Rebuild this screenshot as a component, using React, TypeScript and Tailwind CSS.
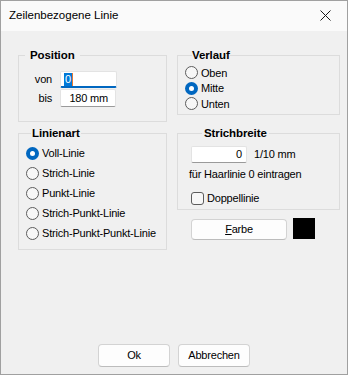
import React from 'react';

const font = "font-['Liberation_Sans',Arial,sans-serif]";

function Group({
  title,
  legendClass,
  className,
  children,
}: {
  title: string;
  legendClass: string;
  className: string;
  children: React.ReactNode;
}) {
  return (
    <fieldset className={`border border-[#dcdcdc] min-w-0 ${className}`}>
      <legend className={`text-[11.5px] font-bold leading-[14px] tracking-[-0.1px] ${legendClass}`}>{title}</legend>
      {children}
    </fieldset>
  );
}

function Radio({ checked, label, className = '' }: { checked?: boolean; label: string; className?: string }) {
  return (
    <div className={`flex items-center gap-[3px] ${className}`}>
      {checked ? (
        <span className="flex h-[13px] w-[13px] shrink-0 items-center justify-center rounded-full bg-[#0067c0]">
          <span className="h-[5px] w-[5px] rounded-full bg-white" />
        </span>
      ) : (
        <span className="h-[13px] w-[13px] shrink-0 rounded-full border border-[#5c5c5c] bg-[#f7f7f7]" />
      )}
      <span>{label}</span>
    </div>
  );
}

function Button({ children, className = '' }: { children: React.ReactNode; className?: string }) {
  return (
    <button className={`flex items-center justify-center rounded-[4px] border border-[#d3d3d3] border-b-[#bcbcbc] bg-[#fdfdfd] ${className}`}>
      {children}
    </button>
  );
}

export default function App() {
  return (
    <div className={`h-[376px] w-[349px] bg-white text-[11px] tracking-[-0.2px] text-black ${font}`}>
      <div className="flex h-[375px] w-[348px] flex-col border border-[#a0a0a0]">
        {/* Title bar */}
        <div className="flex h-[30px] shrink-0 items-start justify-between bg-[#fafafa] pl-[8px] pr-[16px] pt-[7px]">
          <span className="text-[11.5px] leading-[14px] tracking-normal">Zeilenbezogene Linie</span>
          <svg className="mt-[2px] h-[11px] w-[11px]" viewBox="0 0 11 11" fill="none" stroke="#1a1a1a" strokeWidth="1">
            <path d="M0.5 0.5L10.5 10.5M10.5 0.5L0.5 10.5" />
          </svg>
        </div>

        {/* Client area */}
        <div className="flex flex-1 flex-col bg-[#f0f0f0] pl-[17px] pr-[7px] pt-[17px]">
          <div className="grid grid-cols-[149px_163px] items-start gap-x-[10px] gap-y-[4px]">
            {/* Position */}
            <Group title="Position" legendClass="ml-[6px] px-[5px]" className="pb-[14px] pt-[9px]">
              <div className="flex flex-col gap-[1px] pl-[13px]">
                <div className="flex items-center gap-[8px]">
                  <span className="w-[20px] text-right">von</span>
                  <div className="flex h-[17px] w-[57px] items-center rounded-[2px] border border-[#e3e3e3] border-b-2 border-b-[#0067c0] bg-white pl-[3px]">
                    <span className="bg-[#0078d7] px-[1px] leading-[13px] text-white">0</span>
                    <span className="h-[13px] w-[1px] bg-[#e8772e]" />
                  </div>
                </div>
                <div className="flex items-center gap-[8px]">
                  <span className="w-[20px] text-right">bis</span>
                  <div className="flex h-[18px] w-[56px] items-center justify-end rounded-[2px] border border-[#e3e3e3] border-b-[#9a9a9a] bg-white pr-[7px]">
                    180 mm
                  </div>
                </div>
              </div>
            </Group>

            {/* Verlauf */}
            <Group title="Verlauf" legendClass="ml-[7px]" className="pb-[2px] pl-[7px] pt-[3px]">
              <Radio label="Oben" className="h-[15.5px]" />
              <Radio label="Mitte" checked className="h-[15.5px]" />
              <Radio label="Unten" className="h-[15.5px]" />
            </Group>

            {/* Linienart */}
            <Group title="Linienart" legendClass="ml-[5px] px-[1px]" className="pb-[6px] pl-[7px] pt-[3px]">
              <Radio label="Voll-Linie" checked className="h-[20px]" />
              <Radio label="Strich-Linie" className="h-[20px]" />
              <Radio label="Punkt-Linie" className="h-[20px]" />
              <Radio label="Strich-Punkt-Linie" className="h-[20px]" />
              <Radio label="Strich-Punkt-Punkt-Linie" className="h-[20px]" />
            </Group>

            <div className="flex flex-col">
              {/* Strichbreite */}
              <Group title="Strichbreite" legendClass="ml-[11px] px-[2px]" className="pb-[4px] pl-[13px] pt-[6px]">
                <div className="flex items-center gap-[7px]">
                  <div className="flex h-[17px] w-[56px] items-center justify-end rounded-[2px] border border-[#e3e3e3] border-b-[#9a9a9a] bg-white pr-[4px]">
                    0
                  </div>
                  <span>1/10 mm</span>
                </div>
                <div className="-ml-[2px] mt-[4px] leading-[14px]">für Haarlinie 0 eintragen</div>
                <div className="mt-[11px] flex h-[13px] items-center gap-[3px]">
                  <span className="h-[13px] w-[13px] rounded-[3px] border border-[#5c5c5c] bg-[#f7f7f7]" />
                  <span>Doppellinie</span>
                </div>
              </Group>

              {/* Farbe */}
              <div className="ml-[14px] mt-[8px] flex items-start gap-[6px]">
                <Button className="mt-[1px] h-[21px] w-[96px]">
                  <span>
                    <span className="underline underline-offset-1">F</span>arbe
                  </span>
                </Button>
                <div className="h-[21px] w-[22px] bg-black" />
              </div>
            </div>
          </div>

          {/* Dialog buttons */}
          <div className="mt-auto flex justify-center gap-[8px] pb-[7px] pr-[10px]">
            <Button className="h-[23px] w-[72px]">Ok</Button>
            <Button className="h-[23px] w-[72px]">Abbrechen</Button>
          </div>
        </div>
      </div>
    </div>
  );
}
